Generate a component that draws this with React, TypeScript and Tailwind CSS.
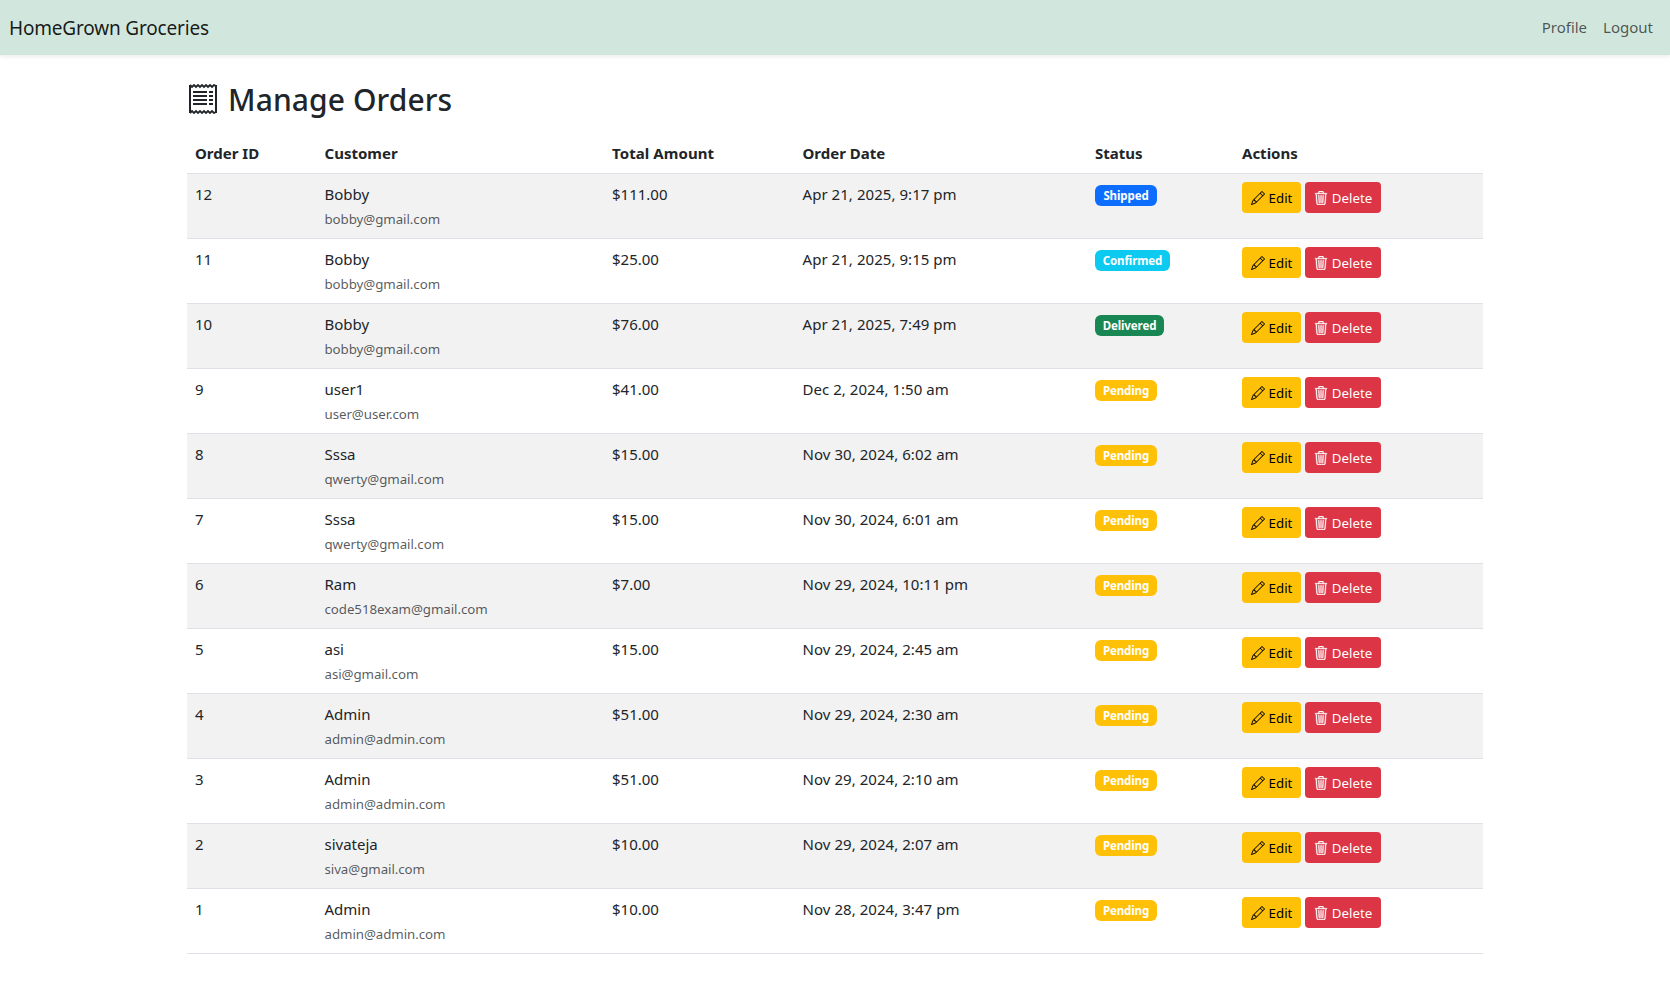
import React from "react";
import { BsPencil, BsTrash3 } from "react-icons/bs";

type Status = "Shipped" | "Confirmed" | "Delivered" | "Pending";

interface Order {
  id: number;
  name: string;
  email: string;
  total: string;
  date: string;
  status: Status;
}

const orders: Order[] = [
  { id: 12, name: "Bobby", email: "bobby@gmail.com", total: "$111.00", date: "Apr 21, 2025, 9:17 pm", status: "Shipped" },
  { id: 11, name: "Bobby", email: "bobby@gmail.com", total: "$25.00", date: "Apr 21, 2025, 9:15 pm", status: "Confirmed" },
  { id: 10, name: "Bobby", email: "bobby@gmail.com", total: "$76.00", date: "Apr 21, 2025, 7:49 pm", status: "Delivered" },
  { id: 9, name: "user1", email: "user@user.com", total: "$41.00", date: "Dec 2, 2024, 1:50 am", status: "Pending" },
  { id: 8, name: "Sssa", email: "qwerty@gmail.com", total: "$15.00", date: "Nov 30, 2024, 6:02 am", status: "Pending" },
  { id: 7, name: "Sssa", email: "qwerty@gmail.com", total: "$15.00", date: "Nov 30, 2024, 6:01 am", status: "Pending" },
  { id: 6, name: "Ram", email: "code518exam@gmail.com", total: "$7.00", date: "Nov 29, 2024, 10:11 pm", status: "Pending" },
  { id: 5, name: "asi", email: "asi@gmail.com", total: "$15.00", date: "Nov 29, 2024, 2:45 am", status: "Pending" },
  { id: 4, name: "Admin", email: "admin@admin.com", total: "$51.00", date: "Nov 29, 2024, 2:30 am", status: "Pending" },
  { id: 3, name: "Admin", email: "admin@admin.com", total: "$51.00", date: "Nov 29, 2024, 2:10 am", status: "Pending" },
  { id: 2, name: "sivateja", email: "siva@gmail.com", total: "$10.00", date: "Nov 29, 2024, 2:07 am", status: "Pending" },
  { id: 1, name: "Admin", email: "admin@admin.com", total: "$10.00", date: "Nov 28, 2024, 3:47 pm", status: "Pending" },
];

const badge: Record<Status, string> = {
  Shipped: "w-[62px] bg-[#0d6efd]",
  Confirmed: "w-[75px] bg-[#0dcaf0]",
  Delivered: "w-[69px] bg-[#198754]",
  Pending: "w-[62px] bg-[#ffc107]",
};

function ReceiptIcon() {
  return (
    <svg width="28" height="30" viewBox="0 0 28 30" fill="none" stroke="currentColor" className="shrink-0">
      <path d="M1 1v28M27 1v28" strokeWidth="2" />
      <path d="M1 1l2 2 2-2 2 2 2-2 2 2 2-2 2 2 2-2 2 2 2-2 2 2 2-2 2 1" strokeWidth="1.8" />
      <path d="M1 29l2-2 2 2 2-2 2 2 2-2 2 2 2-2 2 2 2-2 2 2 2-2 2 2 2-1" strokeWidth="1.8" />
      <path d="M4 8h14M4 12h14M4 16h14M4 20h14M20 8h4M20 12h4M20 16h4M20 20h4" strokeWidth="2" />
    </svg>
  );
}

export default function App() {
  return (
    <div className="min-h-[988px] bg-white font-['Noto_Sans',sans-serif] text-[15px] leading-6 text-[#212529]">
      <nav className="flex h-[55px] items-center justify-between bg-[#d1e7dd] pr-[17px] pl-[9px] shadow-[0_2px_4px_rgba(0,0,0,0.075)]">
        <a className="text-[19px] tracking-[-0.18px] text-black/90">HomeGrown Groceries</a>
        <div className="flex gap-4 pb-0.5 text-black/65">
          <a>Profile</a>
          <a>Logout</a>
        </div>
      </nav>
      <main className="mx-auto w-[1296px] pt-6">
        <h2 className="mb-[15px] flex h-[39px] items-center gap-[11px] pl-[2px] text-[30px] leading-[39px] font-medium tracking-[0.1px]">
          <ReceiptIcon />
          <span className="pt-0.5">Manage Orders</span>
        </h2>
        <table className="w-full table-fixed border-collapse text-left">
          <colgroup>
            <col className="w-[129.5px]" />
            <col className="w-[287.5px]" />
            <col className="w-[190.5px]" />
            <col className="w-[292.5px]" />
            <col className="w-[147px]" />
            <col />
          </colgroup>
          <thead>
            <tr className="h-10 border-b border-[#dee2e6] font-bold">
              <th className="px-2 pt-px">Order ID</th>
              <th className="px-2 pt-px">Customer</th>
              <th className="px-2 pt-px tracking-[0.08px]">Total Amount</th>
              <th className="px-2 pt-px">Order Date</th>
              <th className="px-2 pt-px">Status</th>
              <th className="px-2 pt-px">Actions</th>
            </tr>
          </thead>
          <tbody>
            {orders.map((o) => (
              <tr key={o.id} className="h-[65px] border-b border-[#dee2e6] align-top odd:bg-[#f2f2f2]">
                <td className="px-2 pt-2">{o.id}</td>
                <td className="px-2 pt-2">
                  <div>{o.name}</div>
                  <div className="mt-0.5 text-[13.3px] leading-[23px] tracking-[-0.06px] text-[#212529]/75">{o.email}</div>
                </td>
                <td className="px-2 pt-2">{o.total}</td>
                <td className="px-2 pt-2 tracking-[0.05px]">{o.date}</td>
                <td className="px-2 pt-[11px]">
                  <span className={`flex h-[21px] items-center justify-center rounded-md pt-0.5 text-[11.5px] leading-3 font-bold tracking-[-0.1px] text-white ${badge[o.status]}`}>
                    {o.status}
                  </span>
                </td>
                <td className="px-2 pt-2">
                  <div className="flex gap-1 text-[13.3px] leading-[21px]">
                    <button className="flex h-[31px] w-[59px] items-center justify-center gap-1 rounded bg-[#ffc107] pt-0.5 text-black">
                      <BsPencil size={14} />
                      Edit
                    </button>
                    <button className="flex h-[31px] w-[76px] items-center justify-center gap-1 rounded bg-[#dc3545] pt-0.5 text-white">
                      <BsTrash3 size={14} strokeWidth={0.4} />
                      Delete
                    </button>
                  </div>
                </td>
              </tr>
            ))}
          </tbody>
        </table>
      </main>
    </div>
  );
}
